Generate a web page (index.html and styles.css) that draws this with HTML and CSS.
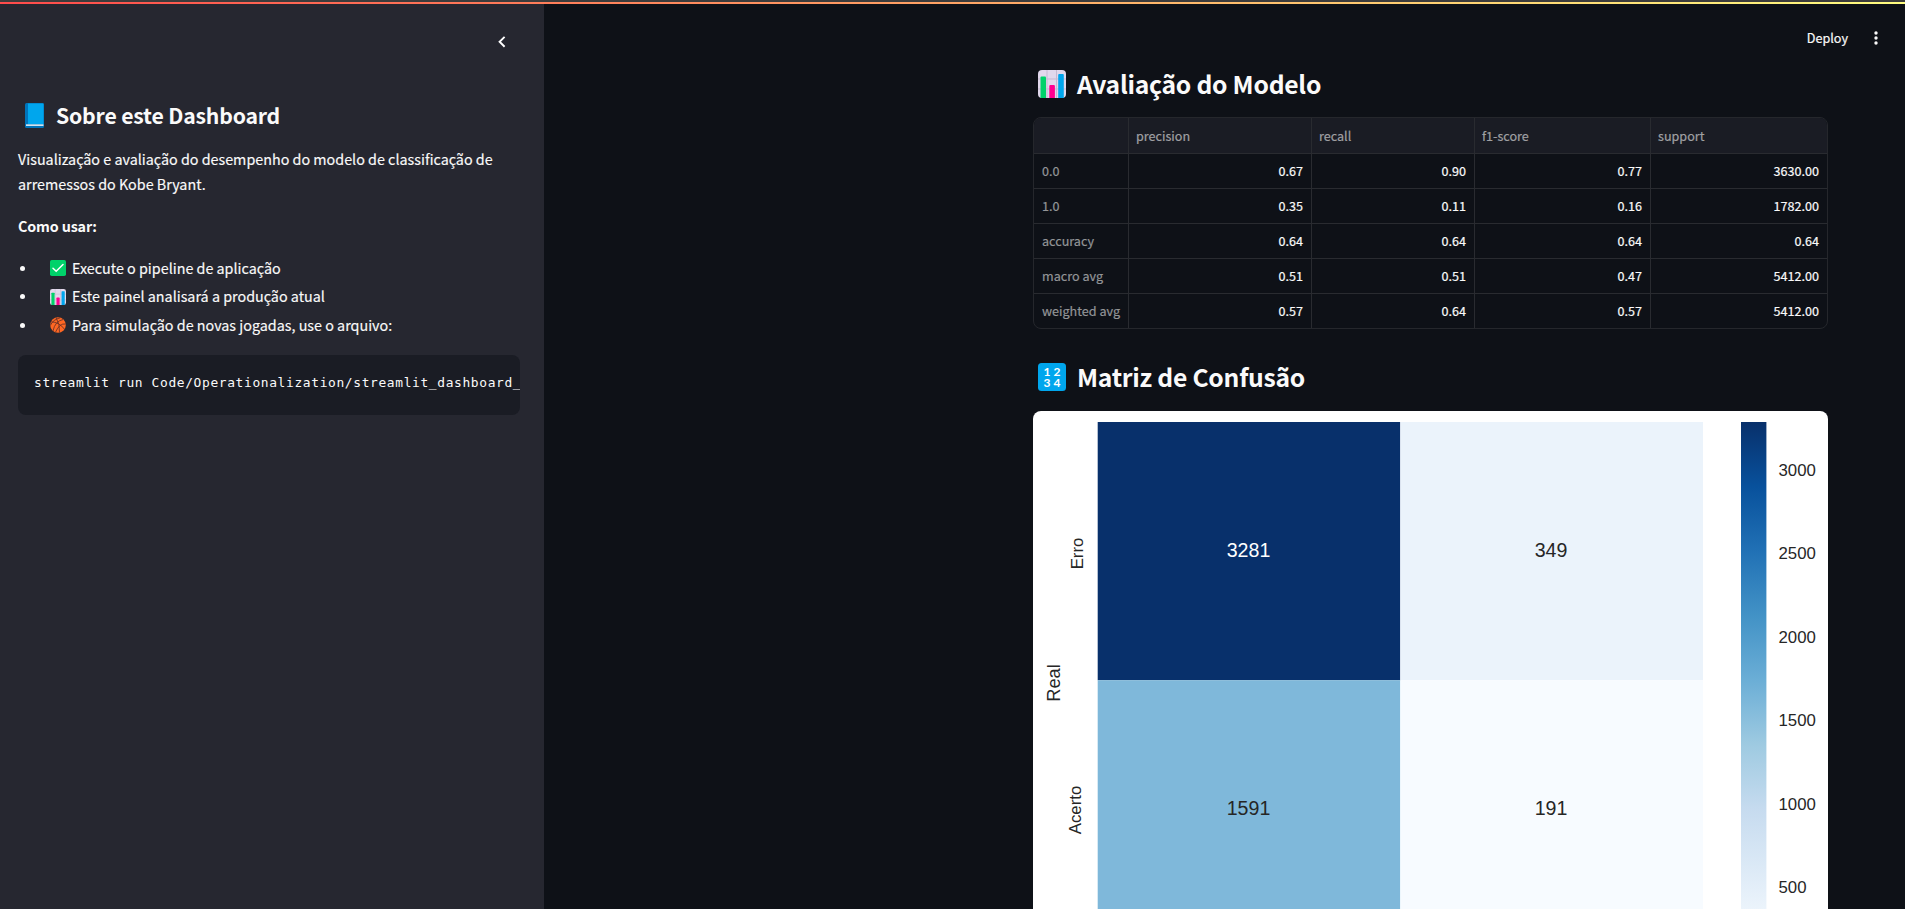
FILE: index.html
```html
<!DOCTYPE html>
<html lang="pt-BR">
<head>
<meta charset="utf-8">
<title>Dashboard</title>
<link rel="stylesheet" href="styles.css">
</head>
<body>
<svg class="defs" aria-hidden="true">
  <symbol id="bars" viewBox="0 0 28 28">
    <rect width="28" height="28" rx="4" fill="#e1d8ec"/>
    <path d="M0 9H28M0 19H28M9 0V28M18.5 0V28" stroke="#c5b9d2" stroke-width="1"/>
    <path d="M2.5 28V7.500q0-1 1-1H7q1 0 1 1V28z" fill="#00d26a"/>
    <path d="M11.300 28V16q0-1 1-1h3.600q1 0 1 1V28z" fill="#ff0090"/>
    <path d="M20.200 28V5q0-1 1-1h3.600q1 0 1 1V28z" fill="#00a6ed"/>
  </symbol>
</svg>
<div class="decoration"></div>
<div class="app">
  <aside class="sidebar">
    <div class="sidebar-head">
      <svg width="8" height="12" viewBox="0 0 8 12"><path d="M6.600 .9L1.600 5.800l5 4.900" fill="none" stroke="#fff" stroke-width="1.900"/></svg>
    </div>
    <h2 class="side-title">
      <svg width="19" height="25" viewBox="0 0 19 25"><rect width="19" height="25" rx="1.500" fill="#0074ba"/><path d="M3 .5H18.500V21H3z" fill="#00a6ed"/><path d="M1 21.300H18.500V23H1z" fill="#d3e4ef"/></svg>
      <span>Sobre este Dashboard</span>
    </h2>
    <p class="text">Visualização e avaliação do desempenho do modelo de classificação de<br>arremessos do Kobe Bryant.</p>
    <p class="text strong">Como usar:</p>
    <ul class="list">
      <li><i class="dot"></i><svg width="16" height="16" viewBox="0 0 16 16"><rect width="16" height="16" rx="1.800" fill="#00d26a"/><path d="M3 8.200l3.200 3.100L13 4.500" fill="none" stroke="#fff" stroke-width="1.500" stroke-linecap="round"/></svg><span>Execute o pipeline de aplicação</span></li>
      <li><i class="dot"></i><svg width="16" height="16"><use href="#bars"/></svg><span>Este painel analisará a produção atual</span></li>
      <li><i class="dot"></i><svg width="16" height="16" viewBox="0 0 16 16"><circle cx="8" cy="8" r="7.800" fill="#ff6723"/><path d="M1 4.800Q9 5 14.500 12.200M6 .5Q10 7 9.500 15.500M13.200 2.500Q5 4 3 14M.3 8.500Q3 2.500 10.500 .7M15.700 7Q9.500 6 5.500 15.200" fill="none" stroke="#6d3327" stroke-width=".9"/></svg><span>Para simulação de novas jogadas, use o arquivo:</span></li>
    </ul>
    <pre class="code">streamlit run Code/Operationalization/streamlit_dashboard_</pre>
  </aside>
  <main class="main">
    <header class="toolbar">
      <span>Deploy</span>
      <svg width="4" height="14" viewBox="0 0 4 14" fill="#fafafa"><circle cx="2" cy="2" r="1.700"/><circle cx="2" cy="7" r="1.700"/><circle cx="2" cy="12" r="1.700"/></svg>
    </header>
    <div class="content">
      <h2 class="title">
        <svg width="28" height="28"><use href="#bars"/></svg>
        <span>Avaliação do Modelo</span>
      </h2>
      <div class="table">
        <div class="th"></div><div class="th">precision</div><div class="th">recall</div><div class="th">f1-score</div><div class="th">support</div>
        <div class="rh">0.0</div><div>0.67</div><div>0.90</div><div>0.77</div><div>3630.00</div>
        <div class="rh">1.0</div><div>0.35</div><div>0.11</div><div>0.16</div><div>1782.00</div>
        <div class="rh">accuracy</div><div>0.64</div><div>0.64</div><div>0.64</div><div>0.64</div>
        <div class="rh">macro avg</div><div>0.51</div><div>0.51</div><div>0.47</div><div>5412.00</div>
        <div class="rh">weighted avg</div><div>0.57</div><div>0.64</div><div>0.57</div><div>5412.00</div>
      </div>
      <h2 class="title second">
        <svg width="28" height="28" viewBox="0 0 28 28"><rect width="28" height="28" rx="3.500" fill="#00a6ed"/><g class="digits"><text x="9" y="12.800">1</text><text x="19" y="12.800">2</text><text x="9" y="24.300">3</text><text x="19" y="24.300">4</text></g></svg>
        <span>Matriz de Confusão</span>
      </h2>
      <svg class="chart" width="795" height="498" viewBox="1033 411 795 498">
        <defs>
          <linearGradient id="blues" x1="0" y1="0" x2="0" y2="1">
            <stop offset="0" stop-color="#08306b"/><stop offset=".125" stop-color="#08519c"/><stop offset=".25" stop-color="#2171b5"/><stop offset=".375" stop-color="#4292c6"/><stop offset=".5" stop-color="#6baed6"/><stop offset=".625" stop-color="#9ecae1"/><stop offset=".75" stop-color="#c6dbef"/><stop offset=".875" stop-color="#deebf7"/><stop offset="1" stop-color="#f7fbff"/>
          </linearGradient>
        </defs>
        <rect x="1097.700" y="422" width="302.600" height="258.200" fill="#08306b"/>
        <rect x="1400.300" y="422" width="302.700" height="258.200" fill="#ebf3fb"/>
        <rect x="1097.700" y="680.200" width="302.600" height="258" fill="#7fb8da"/>
        <rect x="1400.300" y="680.200" width="302.700" height="258" fill="#f7fbff"/>
        <rect x="1741" y="422" width="25.400" height="516.200" fill="url(#blues)"/>
        <g class="value">
          <text class="light" x="1248.500" y="556.500">3281</text><text x="1551" y="556.500">349</text>
          <text x="1248.500" y="815">1591</text><text x="1551" y="815">191</text>
        </g>
        <g class="tick">
          <text x="1778.500" y="475.600">3000</text><text x="1778.500" y="559">2500</text><text x="1778.500" y="642.500">2000</text><text x="1778.500" y="726">1500</text><text x="1778.500" y="809.500">1000</text><text x="1778.500" y="893">500</text>
        </g>
        <g class="axis">
          <text transform="translate(1082.500 553.500) rotate(-90)">Erro</text>
          <text transform="translate(1081 810) rotate(-90)">Acerto</text>
          <text class="label" transform="translate(1059.700 683) rotate(-90)">Real</text>
        </g>
      </svg>
    </div>
  </main>
</div>
</body>
</html>
```
FILE: styles.css
```css
* { box-sizing: border-box; }
body {
  margin: 0;
  height: 909px;
  overflow: hidden;
  background: #0e1117;
  color: #fafafa;
  font: 14.330px/25px "Noto Sans CJK JP", "Noto Sans", sans-serif;
}
h2, p, ul, pre { margin: 0; padding: 0; font-weight: normal; }
.defs { position: absolute; width: 0; height: 0; }
.decoration {
  height: 4px;
  border-top: 2px solid #3c3c3c;
  background: linear-gradient(90deg, #ff4b4b, #fffd80);
}
.app { display: flex; height: 905px; }
.sidebar { width: 544px; flex: none; padding: 0 24px 0 18px; background: #262730; }
.sidebar-head { display: flex; justify-content: flex-end; height: 89px; padding: 32px 14px 0 0; }
.side-title {
  display: flex;
  align-items: center;
  gap: 12px;
  height: 42px;
  padding-left: 7px;
  font-size: 21.200px;
  font-weight: 700;
  letter-spacing: -.18px;
  white-space: nowrap;
}
.side-title svg { margin-top: 2px; }
.text { margin-top: 11px; white-space: nowrap; -webkit-text-stroke: .15px; }
.strong { margin-top: 17px; font-weight: 700; -webkit-text-stroke: 0; letter-spacing: -.15px; }
.list { margin-top: 15px; list-style: none; -webkit-text-stroke: .15px; }
.list li { display: flex; align-items: center; height: 28.500px; white-space: nowrap; }
.dot { width: 5px; height: 5px; margin: 2px 25px 0 2px; border-radius: 50%; background: #fafafa; }
.list svg { margin: 2px 6px 0 0; }
.code {
  width: 502px;
  height: 60px;
  margin-top: 16px;
  padding: 16px 0 0 16px;
  overflow: hidden;
  border-radius: 8px;
  background: #1a1c24;
  font: 12.900px/24px "DejaVu Sans Mono", monospace;
  letter-spacing: .64px;
}
.main { flex: 1; }
.toolbar {
  display: flex;
  align-items: center;
  justify-content: flex-end;
  gap: 26px;
  height: 58px;
  padding: 8px 27px 0 0;
  font-size: 12.600px;
  -webkit-text-stroke: .2px;
}
.toolbar svg { margin-top: 2px; }
.content { width: 795px; margin-left: 489px; }
.title {
  display: flex;
  align-items: center;
  gap: 11px;
  height: 42px;
  padding-left: 5px;
  font-size: 24.700px;
  font-weight: 700;
  letter-spacing: -.25px;
  white-space: nowrap;
}
.title svg { margin-top: 2px; }
.table {
  display: grid;
  grid-template-columns: 95px 183px 163px 176px 176px;
  grid-template-rows: 36px repeat(5, 35px);
  height: 212px;
  margin-top: 13px;
  overflow: hidden;
  border: 1px solid #25272c;
  border-radius: 8px;
  font-size: 12.600px;
}
.table > div {
  display: flex;
  align-items: center;
  justify-content: flex-end;
  padding: 0 8px 2px;
  border-right: 1px solid #292b30;
  border-bottom: 1px solid #292b30;
  white-space: nowrap;
  -webkit-text-stroke: .2px;
}
.table > div:nth-child(5n) { border-right: 0; }
.table > .th { justify-content: flex-start; padding: 0 0 0 7px; background: #1a1c24; color: #a0a0a3; }
.table > .rh { justify-content: flex-start; padding-right: 0; color: #939597; }
.second { margin-top: 26px; }
.digits { fill: #fff; font: 700 12px/12px "Lato", sans-serif; text-anchor: middle; letter-spacing: 0; }
.chart { display: block; margin-top: 14px; border-radius: 8px 8px 0 0; background: #fff; }
.chart text { font-family: "Liberation Sans", Arial, sans-serif; fill: #262626; }
.value { font-size: 19.600px; text-anchor: middle; }
.chart .light { fill: #fff; }
.tick { font-size: 16.800px; }
.axis { font-size: 16.800px; text-anchor: middle; }
.label { font-size: 18.300px; }
```
